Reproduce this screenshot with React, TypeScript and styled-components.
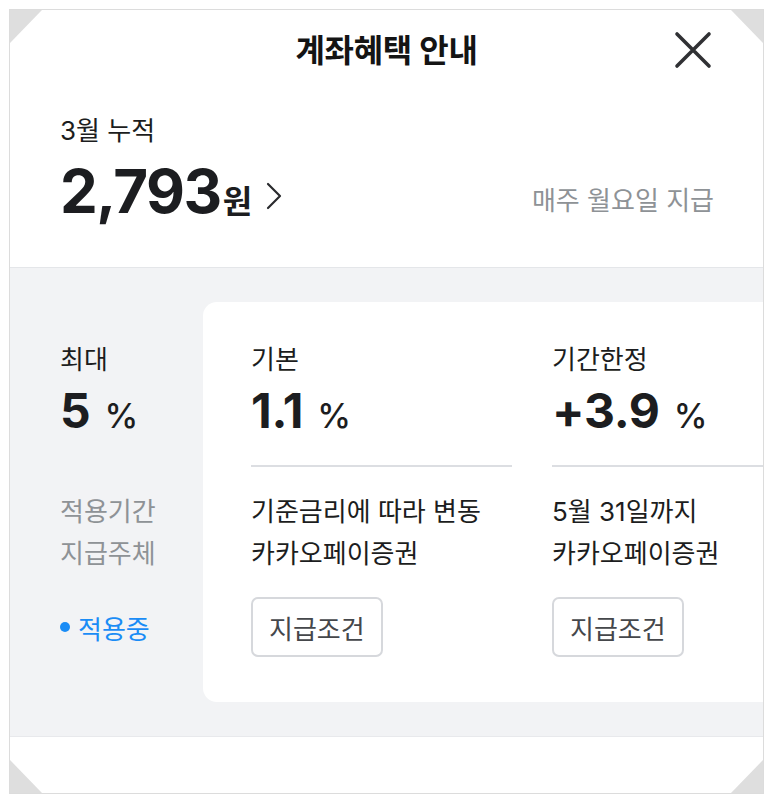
import React from "react";
import styled, { createGlobalStyle } from "styled-components";

const Global = createGlobalStyle`
  html, body { margin: 0; padding: 0; background: #ffffff; }
  body { font-family: "Inter", "Noto Sans CJK KR", sans-serif; color: #1c1d20; }
  * { box-sizing: border-box; }
`;

const Frame = styled.div`
  position: relative;
  margin: 9px;
  height: 785px;
  border: 1px solid #dcdcdc;
  overflow: hidden;
  background: #ffffff;
  display: flex;
  flex-direction: column;
`;

const Corner = styled.div<{ $pos: "tl" | "tr" | "bl" | "br" }>`
  position: absolute;
  width: 32px;
  height: 33px;
  background: #dedede;
  z-index: 5;
  ${({ $pos }) => ($pos[0] === "t" ? "top: 0;" : "bottom: 0;")}
  ${({ $pos }) => ($pos[1] === "l" ? "left: 0;" : "right: 0;")}
  clip-path: ${({ $pos }) =>
    $pos === "tl"
      ? "polygon(0 0, 100% 0, 0 100%)"
      : $pos === "tr"
      ? "polygon(0 0, 100% 0, 100% 100%)"
      : $pos === "bl"
      ? "polygon(0 0, 100% 100%, 0 100%)"
      : "polygon(100% 0, 100% 100%, 0 100%)"};
`;

const Header = styled.header`
  position: relative;
  height: 76px;
  display: flex;
  align-items: center;
  justify-content: center;
`;

const Title = styled.h1`
  margin: 0;
  font-size: 32px;
  font-weight: 700;
  color: #141414;
  letter-spacing: -0.3px;
`;

const CloseButton = styled.button`
  position: absolute;
  right: 50px;
  top: 20px;
  width: 40px;
  height: 40px;
  padding: 0;
  border: 0;
  background: none;
  display: flex;
  align-items: center;
  justify-content: center;
`;

const Summary = styled.section`
  height: 181px;
  padding: 27px 49px 0 50px;
  display: flex;
  flex-direction: column;
`;

const SummaryLabel = styled.div`
  font-size: 26px;
  line-height: 36px;
  color: #1c1d20;
`;

const AmountRow = styled.div`
  margin-top: 10px;
  display: flex;
  align-items: center;
  justify-content: space-between;
`;

const Amount = styled.div`
  display: flex;
  align-items: baseline;
  gap: 2px;
`;

const AmountNumber = styled.span`
  font-size: 60px;
  font-weight: 700;
  letter-spacing: -1.5px;
  line-height: 64px;
`;

const AmountUnit = styled.span`
  font-size: 32px;
  font-weight: 700;
`;

const Chevron = styled.svg`
  margin-left: 12px;
  align-self: center;
  margin-top: 10px;
`;

const PayDay = styled.div`
  font-size: 26px;
  color: #8e9296;
  margin-top: 14px;
`;

const Benefits = styled.section`
  flex: 1;
  background: #f2f3f5;
  border-top: 1px solid #e4e6e9;
  border-bottom: 1px solid #e8e9ec;
  padding: 34px 0 34px 0;
  margin-bottom: 56px;
  display: flex;
  align-items: stretch;
`;

const Card = styled.div`
  flex: 1 0 auto;
  background: #ffffff;
  border-radius: 14px 0 0 14px;
  padding-left: 48px;
  display: flex;
  gap: 40px;
`;

const Column = styled.div<{ $width: number; $pad: number }>`
  width: ${({ $width }) => $width}px;
  flex-shrink: 0;
  padding: 40px 0 45px ${({ $pad }) => $pad}px;
  display: flex;
  flex-direction: column;
`;

const RateLabel = styled.div`
  font-size: 26px;
  line-height: 36px;
  color: #1c1d20;
`;

const Rate = styled.div`
  margin-top: 6px;
  height: 54px;
  display: flex;
  align-items: baseline;
  gap: 14px;
`;

const RateNumber = styled.span`
  font-size: 48px;
  font-weight: 700;
  letter-spacing: -0.3px;
  line-height: 54px;
`;

const RatePercent = styled.span`
  font-size: 34px;
  font-weight: 500;
`;

const Divider = styled.hr<{ $hidden?: boolean }>`
  margin: 27px 0 0 0;
  border: 0;
  height: 2px;
  background: ${({ $hidden }) => ($hidden ? "transparent" : "#dcdee2")};
  width: 100%;
`;

const InfoLine = styled.div<{ $muted?: boolean }>`
  font-size: 26px;
  line-height: 42px;
  color: ${({ $muted }) => ($muted ? "#8e9296" : "#1c1d20")};
  white-space: nowrap;
`;

const Lines = styled.div`
  margin-top: 24px;
`;

const Footer = styled.div`
  margin-top: 22px;
  height: 60px;
  display: flex;
  align-items: center;
`;

const ConditionButton = styled.button`
  height: 60px;
  padding: 0 16px;
  border: 2px solid #d6d8dc;
  border-radius: 7px;
  background: #ffffff;
  font-family: inherit;
  font-size: 26px;
  color: #45474b;
`;

const Status = styled.div`
  display: flex;
  align-items: center;
  gap: 8px;
  font-size: 26px;
  color: #1a8cf6;
`;

const Dot = styled.span`
  width: 10px;
  height: 10px;
  border-radius: 50%;
  background: #1a8cf6;
`;

type Benefit = {
  label: string;
  rate: string;
  lines: string[];
};

const benefits: Benefit[] = [
  { label: "기본", rate: "1.1", lines: ["기준금리에 따라 변동", "카카오페이증권"] },
  { label: "기간한정", rate: "+3.9", lines: ["5월 31일까지", "카카오페이증권"] },
];

export default function App() {
  return (
    <>
      <Global />
      <Frame>
        <Corner $pos="tl" />
        <Corner $pos="tr" />
        <Corner $pos="bl" />
        <Corner $pos="br" />
        <Header>
          <Title>계좌혜택 안내</Title>
          <CloseButton aria-label="닫기">
            <svg width="38" height="38" viewBox="0 0 38 38">
              <path d="M3 3 L35 35 M35 3 L3 35" stroke="#303134" strokeWidth="3.6" strokeLinecap="round" />
            </svg>
          </CloseButton>
        </Header>
        <Summary>
          <SummaryLabel>3월 누적</SummaryLabel>
          <AmountRow>
            <Amount>
              <AmountNumber>2,793</AmountNumber>
              <AmountUnit>원</AmountUnit>
              <Chevron width="16" height="28" viewBox="0 0 16 28">
                <path d="M2 2 L14 14 L2 26" fill="none" stroke="#2a2b2e" strokeWidth="2.2" strokeLinecap="round" strokeLinejoin="round" />
              </Chevron>
            </Amount>
            <PayDay>매주 월요일 지급</PayDay>
          </AmountRow>
        </Summary>
        <Benefits>
          <Column $width={193} $pad={50}>
            <RateLabel>최대</RateLabel>
            <Rate>
              <RateNumber>5</RateNumber>
              <RatePercent>%</RatePercent>
            </Rate>
            <Divider $hidden />
            <Lines>
              <InfoLine $muted>적용기간</InfoLine>
              <InfoLine $muted>지급주체</InfoLine>
            </Lines>
            <Footer>
              <Status>
                <Dot />
                적용중
              </Status>
            </Footer>
          </Column>
          <Card>
            {benefits.map((b) => (
              <Column key={b.label} $width={261} $pad={0}>
                <RateLabel>{b.label}</RateLabel>
                <Rate>
                  <RateNumber>{b.rate}</RateNumber>
                  <RatePercent>%</RatePercent>
                </Rate>
                <Divider />
                <Lines>
                  {b.lines.map((l) => (
                    <InfoLine key={l}>{l}</InfoLine>
                  ))}
                </Lines>
                <Footer>
                  <ConditionButton>지급조건</ConditionButton>
                </Footer>
              </Column>
            ))}
          </Card>
        </Benefits>
      </Frame>
    </>
  );
}
